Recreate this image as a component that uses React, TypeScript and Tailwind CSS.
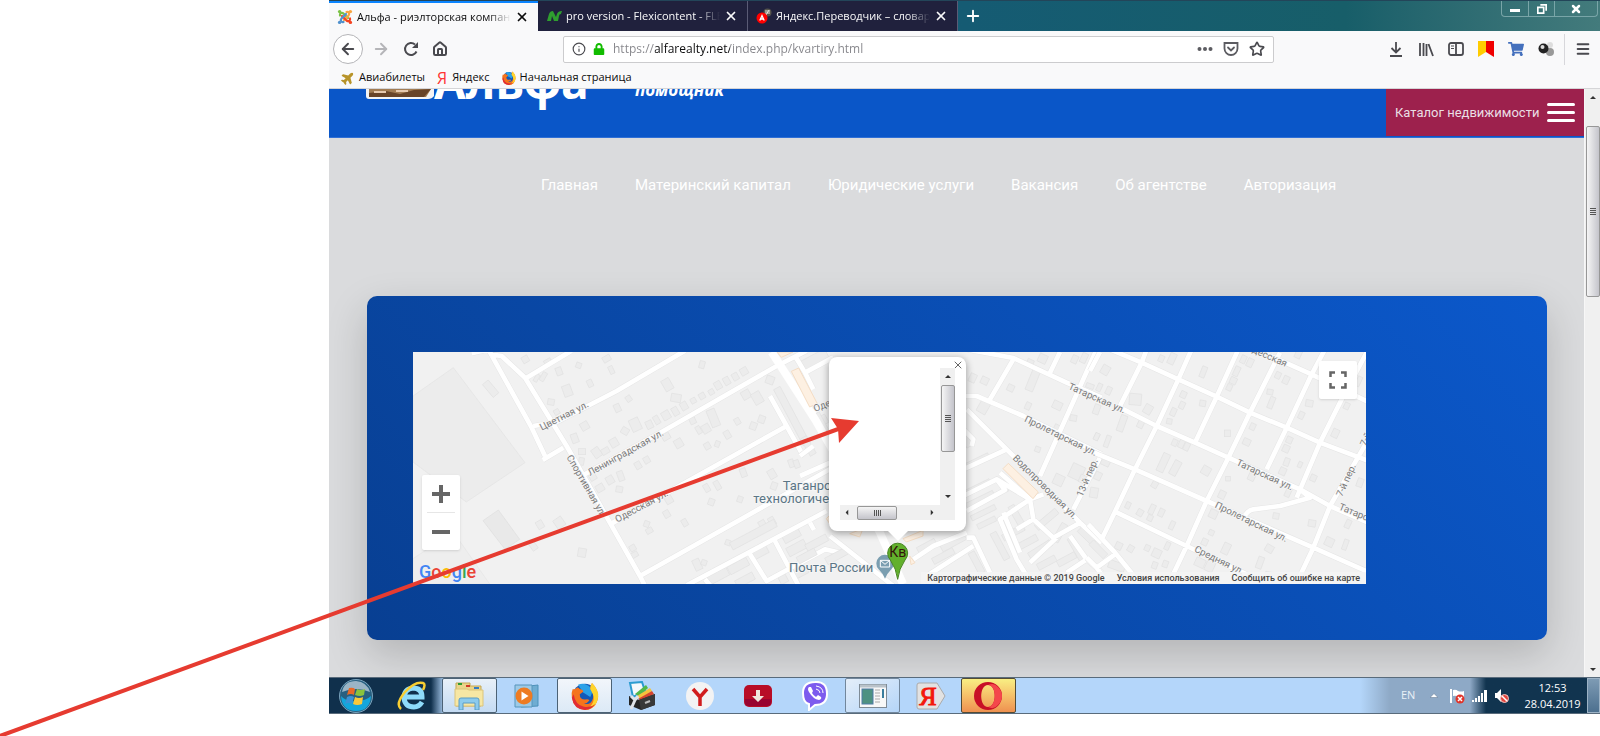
import React from 'react';
import {
  ArrowLeft,
  ArrowRight,
  House,
  Info,
  Menu,
  MoreHorizontal,
  PanelLeft,
  Plus,
  RotateCw,
  Star,
  X,
} from 'lucide-react';
import { FaLock, FaPlane, FaShoppingCart } from 'react-icons/fa';

const bars = [0, 1, 2, 3];

const JoomlaIcon = () => (
  <svg viewBox="0 0 16 16" className="size-4 shrink-0" fill="none" strokeWidth="2.2" strokeLinecap="round">
    <path d="M3 6.5C2.5 4.5 4.500 3 6.500 4.500L11 9" stroke="#7ac143" />
    <path d="M9.500 3C11.500 2.300 13 4.500 11.500 6.500L7 11" stroke="#f9a541" />
    <path d="M13 9.500C13.700 11.500 11.500 13 9.500 11.500L5 7" stroke="#f44321" />
    <path d="M6.500 13C4.500 13.700 3 11.500 4.500 9.500L9 5" stroke="#5091cd" />
    <circle cx="2.600" cy="2.600" r="1.700" fill="#7ac143" />
    <circle cx="13.400" cy="2.600" r="1.700" fill="#f9a541" />
    <circle cx="13.400" cy="13.400" r="1.700" fill="#f44321" />
    <circle cx="2.600" cy="13.400" r="1.700" fill="#5091cd" />
  </svg>
);

const FlexiIcon = () => (
  <svg viewBox="0 0 16 16" className="size-4 shrink-0" fill="#2f9e2f">
    <path d="M1 13L3 6Q4 3 7 3L10 9L11 6Q12 3 16 3L15 6Q13 6 13 8L12 13H8L6 8L5 13Z" />
  </svg>
);

const TranslateIcon = () => (
  <svg viewBox="0 0 16 16" className="size-4 shrink-0">
    <circle cx="11.500" cy="4.500" r="4" fill="#55534c" />
    <path d="M9 3H14M9 5H14M10 7L13 2" stroke="#e5e5dc" />
    <circle cx="6" cy="10" r="5.500" fill="#f00" />
    <path d="M3.800 12.500L6 7.500L8.200 12.500M4.600 11H7.400" stroke="#fff" strokeWidth="1.300" fill="none" />
  </svg>
);

const FirefoxIcon = ({ className }: { className: string }) => (
  <svg viewBox="0 0 32 32" className={className}>
    <circle cx="16" cy="16" r="14" fill="#1559b7" />
    <path d="M8 3Q16 0 22 6Q26 11 22 17L14 12Z" fill="#2ba1e8" />
    <path d="M2 8Q4 9 6 7Q8 5 10 8Q14 9 14 11L10 14Q10 20 16 20Q20 19 21 21Q18 25 14 24Q22 28 25 19Q27 12 22 8Q22 4 24 1Q31 8 31 17Q29 31 16 32Q3 31 1 18Q0 12 2 8Z" fill="#f5741c" />
    <path d="M22 8Q22 4 24 1Q32 9 31 17Q29 31 16 32Q29 25 25 14Z" fill="#ffd52e" />
    <path d="M1 18Q3 31 16 32Q24 31 28 25Q22 30 14 28Q5 26 3 14Z" fill="#e12c35" />
  </svg>
);

const tabs = [
  { title: 'Альфа - риэлторская компания', icon: <JoomlaIcon />, active: true },
  { title: 'pro version - Flexicontent - FLEXI', icon: <FlexiIcon />, active: false },
  { title: 'Яндекс.Переводчик – словарь', icon: <TranslateIcon />, active: false },
];

const TabStrip = () => (
  <div className="flex h-[31px] border-t border-[#234559] bg-linear-to-r from-[#155b73] from-50% via-[#175e69] via-80% to-[#437b7c]">
    {tabs.map((tab) => (
      <div
        key={tab.title}
        className={
          tab.active
            ? 'flex w-[209px] items-center gap-1 border-t-2 border-[#0a84ff] bg-[#f9f9fa] pr-[9px] pl-2 text-[#0c0c0d]'
            : 'flex w-[210px] items-center gap-1 border-r border-[#5a5b75] bg-[#20213d] pr-[9px] pl-2 text-[#f9f9fa]'
        }
      >
        {tab.icon}
        <span className="flex-1 overflow-hidden mask-r-from-85% text-[11px] whitespace-nowrap">{tab.title}</span>
        <button aria-label="Закрыть вкладку">
          <X className="size-[14px]" strokeWidth={3} />
        </button>
      </div>
    ))}
    <button aria-label="Новая вкладка" className="px-[6px] text-white">
      <Plus className="size-[18px]" strokeWidth={2.5} />
    </button>
    <div className="mr-[2px] ml-auto flex h-[16px] w-[97px] divide-x divide-[#79a5a8] rounded-b border border-t-0 border-[#79a5a8] text-white">
      <button aria-label="Свернуть" className="flex w-[27px] items-center justify-center">
        <span className="mt-1 h-[3px] w-[10px] bg-white" />
      </button>
      <button aria-label="Развернуть" className="flex w-[26px] items-center justify-center">
        <svg viewBox="0 0 12 12" className="size-[10px]" fill="none" stroke="#fff" strokeWidth="2">
          <path d="M4 1H11V8M1 4H8V11H1Z" />
        </svg>
      </button>
      <button aria-label="Закрыть" className="flex flex-1 items-center justify-center">
        <X className="size-3" strokeWidth={5} />
      </button>
    </div>
  </div>
);

const Toolbar = () => (
  <div className="flex h-[36px] items-center bg-[#f9f9fa] text-[#4a4a4f]">
    <div className="flex w-[234px] items-center gap-[13px] pl-1">
      <button aria-label="Назад" className="flex size-[30px] items-center justify-center rounded-full border border-[#b5b5b8] bg-white">
        <ArrowLeft className="size-[18px]" strokeWidth={2.5} />
      </button>
      <button aria-label="Вперёд" className="-ml-1 text-[#b5b5b8]">
        <ArrowRight className="size-[18px]" strokeWidth={2.5} />
      </button>
      <button aria-label="Обновить">
        <svg viewBox="0 0 16 16" className="size-4" fill="none" stroke="currentColor" strokeWidth="2">
          <path d="M13.500 10.500A6 6 0 1 1 12 3.500" />
          <path d="M15 1V7H9Z" fill="currentColor" stroke="none" />
        </svg>
      </button>
      <button aria-label="Домой">
        <House className="size-[16px]" strokeWidth={3} />
      </button>
    </div>
    <div className="flex h-[27px] flex-1 items-center gap-[7px] rounded-xs border border-[#ccccce] bg-white px-2">
      <Info className="size-[14px]" />
      <FaLock className="size-3 text-[#12bc00]" />
      <input
        aria-label="Адрес"
        readOnly
        value="https://alfarealty.net/index.php/kvartiry.html"
        className="min-w-0 flex-1 bg-[linear-gradient(to_right,#85858a_43px,#0c0c0d_43px,#0c0c0d_118px,#85858a_118px)] bg-clip-text pl-px text-xs text-transparent outline-none"
      />
      <div className="flex items-center gap-[10px]">
        <svg viewBox="0 0 16 16" className="size-4" fill="#5c5c61">
          <circle cx="2.500" cy="8" r="2" />
          <circle cx="8" cy="8" r="2" />
          <circle cx="13.500" cy="8" r="2" />
        </svg>
        <svg viewBox="0 0 16 16" className="size-4" fill="none" stroke="#5c5c61" strokeWidth="1.800" strokeLinecap="round">
          <path d="M1.500 2H14.500V7.500A6.500 6.500 0 0 1 1.500 7.500Z" />
          <path d="M5 6.500L8 9.500L11 6.500" />
        </svg>
        <Star className="size-4" strokeWidth={2.5} />
      </div>
    </div>
    <div className="flex w-[326px] items-center justify-end gap-[10px] pr-[9px]">
      <div className="flex items-center gap-[14px]">
        <svg viewBox="0 0 16 16" className="size-4" fill="none" stroke="currentColor" strokeWidth="1.800">
          <path d="M8 1V11M3.500 7L8 11.500L12.500 7M2 15H14" />
        </svg>
        <svg viewBox="0 0 16 16" className="size-4" fill="none" stroke="currentColor" strokeWidth="1.800">
          <path d="M2 2V15M5.500 2V15M8.500 3V15M10.500 3L15 15" />
        </svg>
        <svg viewBox="0 0 16 16" className="size-4" fill="none" stroke="currentColor" strokeWidth="1.800">
          <rect x="1" y="2" width="14" height="12" rx="2" />
          <path d="M8 2V14" />
          <path d="M3 5H6M3 7.500H6" strokeWidth="1.200" />
        </svg>
        <svg viewBox="0 0 16 16" className="size-4">
          <path d="M0 0H8V11L0 16Z" fill="#fc0" />
          <path d="M8 0H16V16L8 11Z" fill="#f00000" />
        </svg>
        <FaShoppingCart className="size-4 text-[#4470bd]" />
        <svg viewBox="0 0 16 16" className="size-4">
          <circle cx="12" cy="11" r="4" fill="#999" />
          <circle cx="12" cy="4" r="3" fill="#ddd" />
          <circle cx="5.500" cy="7.500" r="5" fill="#222" />
          <circle cx="4.500" cy="6" r="2" fill="#ddd" />
        </svg>
      </div>
      <div className="flex h-[31px] items-center border-l border-[#d7d7db] pl-[10px]">
        <button aria-label="Меню">
          <Menu className="block size-4" strokeWidth={3} />
        </button>
      </div>
    </div>
  </div>
);

const Bookmarks = () => (
  <div className="flex h-[22px] items-center gap-3 border-b border-[#d5d5d7] bg-[#f9f9fa] pl-3 text-[11px] text-[#0c0c0d]">
    <a href="#avia" className="flex items-center gap-1">
      <FaPlane className="size-[14px] -rotate-45 text-[#b8942a]" />
      Авиабилеты
    </a>
    <a href="#yandex" className="flex items-center gap-[5px]">
      <span className="text-base leading-4 text-[#f33]">Я</span>
      Яндекс
    </a>
    <a href="#start" className="flex items-center gap-1">
      <FirefoxIcon className="size-[14px]" />
      Начальная страница
    </a>
  </div>
);

const menuItems = ['Главная', 'Материнский капитал', 'Юридические услуги', 'Вакансия', 'Об агентстве', 'Авторизация'];

// Roads and buildings are drawn in three adjoining sections, 3 units per pixel.
const westRoads = [
  'M185 22L235 10L365 245L405 330M240 25L275 30L345 95L470 300L690 690L705 720',
  'M345 98L485 14M370 240L440 228L620 135L825 14M398 342L460 305',
  'M515 390L760 255L1100 60L1190 14M600 535L790 430L1130 240M1080 150L1180 330',
  'M1155 30L1185 80L1210 130M1185 80L1270 34M1195 205L1270 165',
  'M690 690L1250 375L1350 320M830 718L1250 495M885 700L900 718M1095 585L1165 718M1020 625L1070 705L1245 610L1290 620M1200 530L1212 552',
];

const centerRoads = [
  'M500 10L640 36L800 110L905 155M640 40L570 160M750 80L780 18M720 390L890 10',
  'M490 150L530 150L670 210L905 325M500 190L620 310L840 530L905 590M620 310L490 370M820 490L900 335',
  'M490 450L590 400L690 460L730 445M600 380L690 460L700 520L760 575L840 530M590 400L615 432L500 495M690 460L600 520L650 640L680 690M610 500L660 620M700 520L650 550M770 575L690 650M810 570L860 640L905 680M860 640L800 680',
  'M480 240L520 280L515 300M500 575L520 575L570 680M380 690L520 600M90 570L280 720M0 330L40 300M0 390L90 350M340 640L400 600L500 560',
];

const eastRoads = [
  'M60 10L155 50L265 100L380 152L480 200L590 245L690 290L835 345',
  'M90 185L200 240L315 290L415 335L630 430L720 480L835 530',
  'M-5 312L25 325L135 370L350 465L670 605L835 678M75 497L290 600L470 685',
  'M30 18L0 75M170 10L155 50L90 180M305 10L265 100L200 240L135 370L75 497L35 580M445 10L380 152L315 290',
  'M570 20L480 200L415 335L350 465L290 600L240 705M705 10L665 85L590 245L530 370M835 10L755 160L690 290L620 455M835 280L720 480L670 605L625 700',
  'M530 25L665 85L835 168M465 508Q475 492 490 490L570 480L660 455L630 430M-5 535L75 620L140 700M75 625L20 665L-10 635M20 665L45 700',
];

type Box = [number, number, number, number, number];

const westBoxes: Box[] = [
  [242, 128, 22, 50, -40], [346, 40, 20, 20, -30], [415, 50, 22, 22, -30], [447, 76, 18, 24, -20], [400, 92, 14, 28, 30],
  [380, 96, 12, 24, 30], [506, 58, 16, 16, 20], [590, 38, 24, 18, -30], [604, 72, 14, 24, -25], [472, 134, 26, 34, -20],
  [540, 112, 16, 22, -25], [423, 168, 20, 18, 10], [440, 198, 16, 16, -30], [524, 240, 24, 24, -30], [494, 277, 20, 28, -20],
  [516, 317, 22, 18, 0], [514, 346, 16, 22, 10], [560, 320, 24, 30, -35], [586, 315, 24, 18, -30], [612, 290, 24, 26, -30],
  [645, 255, 22, 20, 30], [676, 236, 30, 38, -25], [656, 158, 16, 18, -35], [622, 186, 18, 24, -25], [772, 116, 26, 36, -30],
  [798, 156, 30, 24, 10], [876, 56, 16, 22, 15], [718, 236, 20, 24, -25], [740, 222, 16, 26, -30], [768, 208, 24, 26, -30],
  [796, 196, 18, 26, -30], [822, 180, 20, 24, -30], [850, 164, 16, 16, -30], [876, 150, 18, 18, -30], [904, 138, 16, 16, -30],
  [924, 118, 20, 24, -30], [950, 105, 18, 24, -30], [976, 92, 18, 22, -30], [1002, 76, 22, 22, -30], [1080, 102, 24, 24, 20],
  [910, 216, 26, 54, -22], [866, 252, 14, 24, -30], [888, 248, 24, 26, -30], [848, 224, 18, 20, -25], [952, 266, 18, 24, -30],
  [982, 226, 16, 20, -30], [1030, 240, 20, 22, 20], [1055, 220, 20, 22, 20], [1008, 146, 26, 26, -30], [1042, 156, 28, 36, -30],
  [806, 292, 24, 26, -30], [768, 272, 24, 20, -30], [892, 300, 18, 20, -30], [922, 294, 14, 18, 20], [548, 392, 20, 22, -30],
  [570, 426, 24, 22, -30], [600, 402, 22, 24, -30], [632, 390, 18, 30, -20], [628, 430, 20, 18, 10], [684, 358, 18, 22, -30],
  [710, 342, 18, 20, -30], [390, 536, 20, 24, -30], [448, 530, 28, 30, -35], [516, 620, 24, 26, 10], [370, 600, 18, 26, -35],
  [710, 534, 16, 18, 20], [718, 554, 20, 16, -30], [770, 504, 18, 22, -30], [824, 530, 16, 22, -30], [668, 606, 18, 18, -30],
  [674, 626, 20, 16, -30], [776, 460, 22, 26, -30], [890, 426, 16, 24, -30], [922, 418, 16, 28, -30], [904, 468, 18, 20, 20],
  [990, 460, 16, 18, 20], [1000, 380, 18, 26, -20], [1086, 384, 22, 28, -30], [1092, 420, 18, 22, 20], [1144, 352, 16, 24, -20],
  [1160, 354, 16, 24, -20], [1058, 536, 20, 26, -30], [1086, 526, 18, 26, -30], [954, 590, 16, 16, 20], [862, 656, 22, 34, -25],
  [882, 650, 16, 16, 20], [1030, 566, 24, 150, 62], [1145, 210, 22, 190, -28], [1240, 222, 24, 28, -30],
  [1215, 40, 80, 30, -28], [925, 690, 64, 26, -28], [985, 660, 64, 26, -28], [1050, 620, 50, 24, -28], [1145, 570, 54, 24, -28],
  [1160, 606, 60, 28, -28], [1005, 702, 58, 24, -28], [1170, 680, 50, 24, -28], [1120, 700, 24, 24, -28],
];

const centerBoxes: Box[] = [
  [550, 184, 30, 36, 30], [518, 96, 20, 26, 25], [554, 104, 22, 22, 25], [632, 126, 20, 20, 25], [684, 180, 16, 22, 25],
  [698, 104, 24, 64, 22], [728, 38, 26, 26, 25], [824, 40, 18, 24, 25], [852, 36, 18, 30, 25], [772, 178, 28, 24, 25],
  [820, 216, 20, 18, 10], [713, 310, 16, 16, 20], [770, 250, 20, 28, 25], [830, 378, 40, 44, 25], [850, 400, 24, 24, 25],
  [890, 272, 14, 20, 25], [776, 402, 30, 32, 25], [690, 50, 20, 20, 25], [870, 120, 24, 14, 20],
  [530, 425, 90, 16, -26], [540, 460, 90, 16, -26], [550, 500, 80, 16, -26], [560, 530, 60, 16, -26], [530, 345, 80, 16, -26],
  [500, 285, 20, 38, -30], [650, 510, 70, 20, 60], [640, 560, 70, 20, -28], [680, 590, 70, 20, -28], [720, 610, 76, 20, -32],
  [740, 520, 80, 20, -40], [780, 560, 20, 60, 30], [830, 610, 80, 20, 60], [800, 640, 60, 20, -28], [740, 650, 60, 20, -28],
  [860, 570, 60, 20, 44], [460, 590, 80, 20, -28], [430, 630, 70, 20, -28], [530, 650, 20, 70, -28], [600, 600, 20, 90, -28],
  [380, 600, 60, 20, -28], [50, 590, 70, 22, -28], [110, 630, 70, 22, -28], [20, 630, 60, 22, -28], [60, 230, 26, 60, -28], [25, 300, 60, 20, 60],
];

const eastBoxes: Box[] = [
  [46, 72, 24, 28, 30], [28, 124, 14, 24, 25], [56, 134, 16, 24, 25], [20, 190, 18, 30, 20], [96, 232, 20, 50, 20],
  [136, 160, 36, 34, 5], [174, 190, 24, 28, 30], [152, 234, 18, 24, 25], [214, 38, 16, 20, 25], [246, 38, 20, 34, 25],
  [340, 78, 16, 34, 22], [280, 146, 18, 20, 25], [276, 178, 16, 22, 25], [250, 198, 16, 24, 25], [238, 226, 16, 16, 10],
  [338, 172, 18, 18, 10], [254, 290, 16, 20, 25], [274, 294, 16, 24, 25], [290, 302, 16, 24, 25], [220, 350, 22, 58, 25],
  [256, 366, 22, 46, 28], [348, 374, 26, 26, 30], [194, 416, 18, 20, 30], [20, 272, 14, 22, 25], [52, 286, 14, 36, 20],
  [440, 76, 16, 30, 25], [430, 104, 20, 20, 25], [418, 124, 16, 20, 25], [460, 40, 16, 24, 25], [480, 50, 18, 26, 25],
  [412, 262, 18, 20, 0], [470, 288, 22, 20, 25], [488, 242, 16, 20, 25], [544, 170, 16, 36, 22], [540, 138, 18, 16, 10],
  [588, 102, 18, 24, 25], [564, 88, 16, 20, 25], [658, 172, 22, 20, 10], [634, 208, 16, 22, 25], [598, 282, 18, 20, 25],
  [588, 308, 20, 22, 25], [590, 348, 16, 24, 20], [630, 356, 12, 18, 25], [578, 376, 20, 22, 25], [670, 396, 18, 20, 25],
  [594, 440, 16, 26, 25], [486, 390, 20, 28, 25], [396, 446, 20, 24, 25], [414, 398, 14, 14, 0], [370, 504, 24, 26, 25],
  [114, 478, 14, 20, 25], [150, 500, 18, 20, 30], [186, 490, 16, 30, 25], [180, 516, 16, 18, 25], [214, 500, 16, 24, 25],
  [246, 538, 14, 26, 25], [558, 510, 18, 18, 10], [666, 532, 22, 20, 10], [774, 534, 16, 26, 25], [718, 588, 26, 26, 25],
  [766, 596, 14, 32, 20], [538, 608, 24, 22, 30], [510, 650, 18, 36, 20], [408, 608, 22, 34, 25], [364, 560, 16, 16, 25],
  [344, 588, 18, 20, 25], [330, 650, 30, 26, 25], [360, 660, 26, 34, 25], [86, 600, 20, 22, 25], [122, 608, 18, 20, 30],
  [172, 606, 16, 18, 25], [200, 622, 26, 26, 25], [232, 600, 14, 24, 25], [194, 658, 16, 20, 20], [226, 654, 16, 20, 20],
  [736, 262, 20, 26, 25], [770, 180, 16, 20, 25], [626, 22, 18, 30, 25], [806, 106, 14, 30, 25], [12, 440, 24, 30, 10],
  [24, 390, 20, 24, 25], [46, 350, 26, 18, 25], [810, 410, 18, 26, 20], [550, 690, 50, 20, 10], [25, 610, 20, 60, -45], [80, 660, 50, 24, 20],
];

const MapSection = ({ x, roads, boxes }: { x: number; roads: string[]; boxes: Box[] }) => (
  <g transform={`translate(${x} -18)`}>
    {boxes.map(([cx, cy, w, h, angle], i) => (
      <rect
        key={i}
        x={cx - w / 2}
        y={cy - h / 2}
        width={w}
        height={h}
        transform={`rotate(${angle} ${cx} ${cy})`}
        fill="#ececec"
        stroke="#e1e1e1"
        strokeWidth="2"
      />
    ))}
    <path d={roads.join('')} fill="none" stroke="#e6e6e6" strokeWidth="17" />
    <path d={roads.join('')} fill="none" stroke="#fff" strokeWidth="14" strokeLinejoin="round" />
  </g>
);

const streets: [string, number, number, number][] = [
  ['Цветная ул.', 386, 236, -27],
  ['Ленинградская ул.', 531, 372, -29],
  ['Спортивная ул.', 460, 316, 60],
  ['Одесская ул.', 613, 512, -28],
  ['Одесская', 1206, 180, -22],
  ['Татарская ул.', 1964, 110, 24],
  ['Пролетарская ул.', 1832, 208, 26],
  ['Водопроводная ул.', 1798, 320, 45],
  ['13-й пер.', 2008, 436, -67],
  ['Одесская', 2498, -8, 24],
  ['Татарская ул.', 2468, 338, 25],
  ['Пролетарская ул.', 2404, 466, 26],
  ['Средняя ул.', 2342, 598, 26],
  ['7-й пер.', 2787, 436, -66],
  ['Татарская', 2776, 472, 22],
  ['7-й', 2858, 284, -66],
];

const CityMap = () => (
  <svg viewBox="0 0 2859 696" preserveAspectRatio="xMidYMid slice" className="h-full w-full bg-[#f1f1f1]">
    <path d="M0 132L121 47L336 332L160 450L0 330Z" fill="#ececec" stroke="#e2e2e2" strokeWidth="2" />
    <path d="M210 506L256 474L320 562L276 592Z" fill="#e9e9e9" stroke="#dedede" strokeWidth="2" />
    <path d="M0 620L121 540L230 696H0Z" fill="#eeeeee" stroke="#e6e6e6" strokeWidth="2" />
    <MapSection x={-9} roads={westRoads} boxes={westBoxes} />
    <MapSection x={1161} roads={centerRoads} boxes={centerBoxes} />
    <MapSection x={2031} roads={eastRoads} boxes={eastBoxes} />
    <path d="M1076 0L1206 202L1400 540L1470 696" fill="none" stroke="#fff" strokeWidth="24" />
    <path d="M1135 58L1157 48L1213 155L1190 165ZM1092 0H1140L1105 16ZM1770 350L1786 334L1876 420L1860 440ZM1240 500L1260 480V530ZM1310 545L1350 530L1340 555ZM1470 560L1530 535V552L1480 570ZM1490 612L1506 632L1494 638Z" fill="#fdf0e2" stroke="#f4ddc5" strokeWidth="3" />
    <g fontFamily="Roboto, sans-serif" fontSize="29" fill="#7b7b7b" stroke="#f5f5f5" strokeWidth="5" paintOrder="stroke">
      {streets.map(([name, x, y, angle]) => (
        <text key={`${name}${x}`} transform={`translate(${x} ${y}) rotate(${angle})`}>
          {name}
        </text>
      ))}
    </g>
    <g fontFamily="Roboto, sans-serif" fontSize="39" fill="#5b7686" stroke="#f5f5f5" strokeWidth="6" paintOrder="stroke">
      <text x="1109" y="414">Таганрогский</text>
      <text x="1021" y="454">технологический</text>
      <text x="1128" y="660">Почта России</text>
    </g>
    <path d="M1416 680Q1410 665 1397 652A26 26 0 1 1 1435 652Q1422 665 1416 680Z" fill="#7b9eb0" />
    <path d="M1402 625H1430V645H1402ZM1402 625L1416 637L1430 625" fill="none" stroke="#fff" strokeWidth="3" />
    <path d="M1454 682Q1450 650 1432 624A30 30 0 1 1 1476 624Q1458 650 1454 682Z" fill="#62b02c" stroke="#468420" strokeWidth="3" />
    <text x="1454" y="616" textAnchor="middle" fontFamily="Roboto, sans-serif" fontSize="42" fill="#33130b">Кв</text>
  </svg>
);

const Caret = ({ className }: { className: string }) => (
  <svg viewBox="0 0 8 4" className={className} fill="#333">
    <path d="M0 4L4 0L8 4Z" />
  </svg>
);

const InfoWindow = () => (
  <div className="absolute top-[5px] left-[416px] h-[174px] w-[137px] rounded-lg bg-white shadow-[0_2px_7px_1px_rgba(0,0,0,0.3)]">
    <svg viewBox="0 0 20 10" className="absolute top-full left-[59px] h-[10px] w-5" fill="#fff">
      <path d="M0 0H20L10 10Z" />
    </svg>
    <button aria-label="Закрыть" className="absolute top-[2px] right-[2px] text-[#666]">
      <X className="size-3" />
    </button>
    <div className="absolute top-[11px] left-[11px] flex h-[152px] w-[115px] flex-col">
      <div className="flex flex-1 justify-end">
        <div className="flex w-[15px] flex-col items-center bg-[#f0f0f0] pt-[7px] pb-[7px]">
          <Caret className="h-[3px] w-[6px]" />
          <div className="mt-[7px] mb-auto flex h-[67px] w-[14px] flex-col items-center justify-center gap-px rounded-xs border border-[#979797] bg-linear-to-r from-[#f5f5f5] to-[#c4c4cb]">
            {bars.map((n) => <span key={n} className="h-px w-[6px] bg-[#555]" />)}
          </div>
          <Caret className="h-[3px] w-[6px] rotate-180" />
        </div>
      </div>
      <div className="flex h-[15px] items-center bg-[#f0f0f0] pr-[20px] pl-[4px]">
        <Caret className="h-[3px] w-[6px] -rotate-90" />
        <div className="mr-auto ml-[7px] flex h-[14px] w-[40px] items-center justify-center gap-px rounded-xs border border-[#979797] bg-linear-to-b from-[#f5f5f5] to-[#c4c4cb]">
          {bars.map((n) => <span key={n} className="h-[6px] w-px bg-[#555]" />)}
        </div>
        <Caret className="h-[3px] w-[6px] rotate-90" />
      </div>
    </div>
  </div>
);

const MapPanel = () => (
  <div className="relative h-[232px] flex-1 overflow-hidden font-[Roboto,sans-serif]">
    <CityMap />
    <InfoWindow />
    <button aria-label="Во весь экран" className="absolute top-[9px] right-[9px] flex size-[38px] items-center justify-center rounded-xs bg-white shadow">
      <svg viewBox="0 0 18 18" className="size-[18px]" fill="none" stroke="#666" strokeWidth="2.500">
        <path d="M1.500 6V1.500H6M12 1.500H16.500V6M16.500 12V16.500H12M6 16.500H1.500V12" />
      </svg>
    </button>
    <div className="absolute bottom-[34px] left-[9px] flex w-[38px] flex-col divide-y divide-[#e6e6e6] rounded-xs bg-white px-[5px] shadow">
      <button aria-label="Увеличить" className="flex h-[38px] items-center justify-center">
        <svg viewBox="0 0 18 18" className="size-[18px]" stroke="#666" strokeWidth="4">
          <path d="M9 0V18M0 9H18" />
        </svg>
      </button>
      <button aria-label="Уменьшить" className="flex h-[37px] items-center justify-center">
        <svg viewBox="0 0 18 18" className="size-[18px]" stroke="#666" strokeWidth="4">
          <path d="M0 9H18" />
        </svg>
      </button>
    </div>
    <a href="#google" className="absolute bottom-0 left-[6px] text-[18px] leading-6 font-medium">
      <span className="text-[#4285f4]">G</span>
      <span className="text-[#ea4335]">o</span>
      <span className="text-[#fbbc05]">o</span>
      <span className="text-[#4285f4]">g</span>
      <span className="text-[#34a853]">l</span>
      <span className="text-[#ea4335]">e</span>
    </a>
    <div className="absolute right-0 bottom-0 flex h-3 items-center gap-3 bg-[#f5f5f5]/80 px-[6px] text-[9px] leading-3 font-medium whitespace-nowrap text-[#444]">
      <span>Картографические данные © 2019 Google</span>
      <a href="#terms">Условия использования</a>
      <a href="#report">Сообщить об ошибке на карте</a>
    </div>
  </div>
);

const Site = () => (
  <div className="flex h-[588px]">
    <div className="flex min-w-0 flex-1 flex-col overflow-hidden bg-[#dadbdd]">
      <header className="flex h-[49px] items-start justify-between border-b border-[#2f6fd6] bg-[#0a56c8]">
        <div className="flex h-[26px] items-end pl-[37px] font-[Open_Sans,sans-serif] text-white">
          <svg viewBox="0 0 68 10" className="h-[10px] w-[68px] self-start">
            <path d="M0 0H68V7Q66 10 62 10H3Q0 10 0 7Z" fill="#f4f4f4" />
            <path d="M3 0H65L60 8H3Z" fill="#a27c53" />
            <path d="M3 4L20 2L34 5L48 1L65 0L58 8H3Z" fill="#684428" />
            <path d="M8 3H20M30 2H42" stroke="#e7caaf" strokeWidth="2" />
          </svg>
          <span className="h-[68px] text-[46px] leading-[68px] font-bold">Альфа</span>
          <span className="ml-[46px] h-[36px] text-[17px] leading-[22px] font-bold italic">помощник</span>
        </div>
        <button className="flex h-[47px] w-[198px] items-center justify-between bg-[#9d214d] pr-[9px] pl-[9px] font-[Roboto,sans-serif] text-[13px] whitespace-nowrap text-[#eadfe4]">
          Каталог недвижимости
          <span className="flex w-7 flex-col gap-[5px]">
            <span className="h-[3px] rounded-full bg-white" />
            <span className="h-[3px] rounded-full bg-white" />
            <span className="h-[3px] rounded-full bg-white" />
          </span>
        </button>
      </header>
      <nav className="mt-[35px] mr-9 flex justify-center gap-[37px] font-[Roboto,sans-serif] text-[15px] leading-6 text-white">
        {menuItems.map((item) => (
          <a key={item} href="#menu">{item}</a>
        ))}
      </nav>
      <section className="mt-[99px] mr-[37px] ml-[38px] flex rounded-[10px] bg-linear-45 from-[#083f92] to-[#0b58cb] pt-[56px] pr-[181px] pb-[56px] pl-[46px] shadow-[0_15px_40px_rgba(0,0,0,0.18)]">
        <MapPanel />
      </section>
    </div>
    <div className="flex w-4 flex-col items-center border-l border-[#f7f7f7] bg-[#f0f0f0] pt-[7px] pb-[6px]">
      <Caret className="h-[3px] w-[6px]" />
      <div className="mt-[27px] mb-auto flex h-[171px] w-[14px] flex-col items-center justify-center gap-px rounded-xs border border-[#979797] bg-linear-to-r from-[#f5f5f5] to-[#c4c4cb]">
        {bars.map((n) => <span key={n} className="h-px w-[6px] bg-[#555]" />)}
      </div>
      <Caret className="h-[3px] w-[6px] rotate-180" />
    </div>
  </div>
);

const apps = [
  {
    name: 'Internet Explorer',
    frame: '',
    icon: (
      <svg viewBox="0 0 30 30" className="size-[30px]" fill="none">
        <path d="M8 16H25Q25 7 16 7Q7 8 7 17Q8 26 17 26Q22 26 25 21" stroke="#8edbfa" strokeWidth="5" />
        <path d="M4 28Q-2 23 8 11Q18 0 26 2Q29 3 26 9" stroke="#f8ce32" strokeWidth="2.500" />
      </svg>
    ),
  },
  {
    name: 'Проводник',
    frame: 'border border-[#4c6275] bg-linear-to-b from-[#e8f0f8] to-[#c4dbf3]',
    icon: (
      <svg viewBox="0 0 30 28" className="h-7 w-[30px]">
        <path d="M2 1H16V4H27V24H2Z" fill="#ead58a" stroke="#c5a752" />
        <path d="M4 2H8" stroke="#2d9b31" strokeWidth="2" />
        <path d="M12 4H16" stroke="#d13a28" strokeWidth="2" />
        <path d="M20 6H25" stroke="#347cc1" strokeWidth="2" />
        <path d="M1 7H13L15 8H29V24H1Z" fill="#f7e7a4" stroke="#dbc47a" />
        <path d="M5 28V18Q5 16 7 16H23Q25 16 25 18V28H21V21H9V28Z" fill="#8ccbed" stroke="#5a9cc5" />
      </svg>
    ),
  },
  {
    name: 'Windows Media',
    frame: '',
    icon: (
      <svg viewBox="0 0 28 24" className="h-6 w-7">
        <path d="M8 3L25 1V22L8 23Z" fill="#6fadd2" stroke="#4d91ba" />
        <path d="M2 1H19V23H2Z" fill="#9cc9e5" stroke="#5795bc" />
        <circle cx="11" cy="12" r="8.500" fill="#ee7b22" />
        <path d="M8.500 7.500L15.500 12L8.500 16.500Z" fill="#fff" />
      </svg>
    ),
  },
  {
    name: 'Firefox',
    frame: 'border border-[#4c6275] bg-linear-to-b from-[#f2f6fb] to-[#dce9f6]',
    icon: <FirefoxIcon className="size-7" />,
  },
  {
    name: 'Файлы',
    frame: '',
    icon: (
      <svg viewBox="0 0 30 30" className="size-[30px]">
        <path d="M3 2L15 1L18 10L6 16Z" fill="#f4f8fb" stroke="#2b9cd0" strokeWidth="2" />
        <path d="M8 13L19 4L21 7L12 15Z" fill="#52b848" />
        <path d="M10 15L23 7L25 10L13 18Z" fill="#f5c13c" />
        <path d="M11 18L25 10L27 13L15 20Z" fill="#d6452f" />
        <path d="M2 15L12 19L28 13V24L14 29L2 24Z" fill="#252525" />
        <path d="M12 19L28 13V24L14 29Z" fill="#383838" />
        <path d="M18 22L23 20" stroke="#bbb" strokeWidth="2" />
        <path d="M4 28L8 19M4 15L8 19L11 15" stroke="#dfe3e8" strokeWidth="3" fill="none" />
      </svg>
    ),
  },
  {
    name: 'Яндекс.Браузер',
    frame: '',
    icon: (
      <svg viewBox="0 0 28 28" className="size-7">
        <circle cx="14" cy="14" r="14" fill="#f3f3f3" />
        <path d="M7 7L14 15L21 7M14 15V24" fill="none" stroke="#d11d1d" strokeWidth="3.500" />
      </svg>
    ),
  },
  {
    name: 'Загрузчик',
    frame: '',
    icon: (
      <svg viewBox="0 0 28 22" className="h-[22px] w-7">
        <rect width="28" height="22" rx="5" fill="#b80d26" />
        <path d="M1 14H27V18Q26 21 23 21H5Q1 21 1 17Z" fill="#980331" />
        <path d="M12 5H16V11H20L14 17L8 11H12Z" fill="#f0e6dc" />
      </svg>
    ),
  },
  {
    name: 'Viber',
    frame: '',
    icon: (
      <svg viewBox="0 0 28 30" className="h-[30px] w-7">
        <path d="M14 1Q26 0 26 13Q26 24 14 24L8 29V23Q2 22 2 12Q2 1 14 1Z" fill="#7d5bee" stroke="#fff" strokeWidth="2" />
        <path d="M8 6Q6 8 8 11Q12 18 18 19Q21 18 20 16L17 14L15 16Q12 14 11 12L12 10L10 6Z" fill="#fff" />
        <path d="M15 5Q22 6 22 12M15 8Q19 9 19 12" fill="none" stroke="#fff" />
      </svg>
    ),
  },
  {
    name: 'Окно',
    frame: 'border border-[#72879c] bg-linear-to-br from-[#e4eef9] to-[#b4d5f8]',
    icon: (
      <svg viewBox="0 0 28 24" className="h-6 w-7">
        <rect x="0.500" y="0.500" width="27" height="23" fill="#f8f8f8" stroke="#7f8b96" />
        <path d="M1 2H27" stroke="#b9c2ca" strokeWidth="3" />
        <rect x="3" y="5" width="11" height="15" fill="#4e9181" stroke="#4f7ba6" />
        <path d="M16 6H21M16 9H21M16 12H21M16 15H21M16 18H21" stroke="#aaa" />
        <rect x="23" y="5" width="2" height="9" fill="#397d9e" />
      </svg>
    ),
  },
  {
    name: 'Яндекс',
    frame: '',
    icon: (
      <svg viewBox="0 0 30 28" className="h-7 w-[30px]">
        <path d="M3 1H21L29 14L21 27H3Q1 27 1 25V3Q1 1 3 1Z" fill="#e2e2e2" stroke="#aaa" />
        <text x="12" y="23" textAnchor="middle" fontFamily="Liberation Serif, serif" fontSize="26" fill="#f3170d" stroke="#f3170d">Я</text>
      </svg>
    ),
  },
  {
    name: 'Opera',
    frame: 'border border-[#534b35] bg-linear-to-b from-[#f8ef83] to-[#ee9150]',
    icon: (
      <svg viewBox="0 0 28 28" className="size-7">
        <path fillRule="evenodd" d="M14 0A14 14 0 1 1 14 28A14 14 0 0 1 14 0ZM14 3C5 3 5 25 14 25C23 25 23 3 14 3Z" fill="#c80f26" />
        <path d="M14 3Q20 0 24 5Q28 9 28 14Q28 19 24 23Q20 28 14 25C23 25 23 3 14 3Z" fill="#f4474b" />
      </svg>
    ),
  },
];

const Taskbar = () => (
  <div className="flex h-[37px] items-center border-t border-b border-[#596b7b] bg-[#b4d6fa] text-white">
    <div className="flex h-full w-[688px] bg-linear-to-r from-[#10304c] from-[102px] to-transparent to-[116px]">
      <button aria-label="Пуск" className="flex w-[54px] items-center justify-center">
        <svg viewBox="0 0 34 34" className="size-[34px]">
          <circle cx="17" cy="17" r="16.500" fill="#286080" stroke="#7aa3bd" />
          <path d="M2 17Q7 23 17 22Q27 22 32 17Q31 32 17 32Q3 32 2 17Z" fill="#13a6dc" />
          <path d="M3 13Q5 2 17 2Q28 3 31 13Q17 7 3 13Z" fill="#9bb5c6" />
          <path d="M10 9Q14 8 16 10L15 16Q12 14 8 16Z" fill="#e86a28" />
          <path d="M18 10Q22 12 26 10L25 16Q21 18 16 16Z" fill="#8ac33d" />
          <path d="M8 18Q12 16 15 18L13 25Q10 23 6 25Z" fill="#3b93d6" />
          <path d="M16 18Q20 20 24 18L23 25Q18 27 14 25Z" fill="#fac83a" />
        </svg>
      </button>
      <div className="grid flex-1 grid-cols-11">
        {apps.map((app) => (
          <div key={app.name} className="flex justify-center">
            <button aria-label={app.name} className={`flex w-[55px] items-center justify-center rounded-xs ${app.frame}`}>
              {app.icon}
            </button>
          </div>
        ))}
      </div>
    </div>
    <div className="ml-auto flex h-full w-[240px] items-center bg-linear-to-r from-transparent via-[#8ea9c6] via-[30px] to-[#8ea9c6] to-[110px]">
      <span className="ml-[41px] w-[14px] text-[11px] text-[#e9f0f7]">EN</span>
      <svg viewBox="0 0 8 4" className="ml-[15px] h-[5px] w-2" fill="#fff" stroke="#59718a" strokeWidth="0.500">
        <path d="M0 4L4 0L8 4Z" />
      </svg>
      <svg viewBox="0 0 16 16" className="ml-[11px] size-4">
        <path d="M2 1V15" stroke="#fff" strokeWidth="2" />
        <path d="M4 2Q7 1 9 3Q12 4 15 3V9Q11 10 9 9Q7 7 4 8Z" fill="#fff" />
        <circle cx="11" cy="11" r="4.500" fill="#e0352b" />
        <path d="M9 9L13 13M13 9L9 13" stroke="#fff" strokeWidth="1.500" />
      </svg>
      <div className="ml-[5px] flex h-full flex-1 items-center bg-linear-to-r from-transparent to-[#11344f] to-[16px]">
        <svg viewBox="0 0 16 12" className="ml-[2px] h-3 w-4" fill="#fff">
          <path d="M0 10H2V12H0ZM3 8H5V12H3ZM6 6H8V12H6ZM9 3H11V12H9ZM12 0H15V12H12Z" />
        </svg>
        <svg viewBox="0 0 16 16" className="ml-[6px] size-4">
          <path d="M1 5H3L7 1V14L3 10H1Z" fill="#fff" />
          <circle cx="10.500" cy="10.500" r="4" fill="#e4453d" stroke="#f2c7c5" />
          <path d="M8 8L13 13" stroke="#fff" strokeWidth="1.500" />
        </svg>
        <div className="flex flex-1 flex-col pl-2 text-center text-[11px] leading-4">
          <span>12:53</span>
          <span>28.04.2019</span>
        </div>
      </div>
      <button aria-label="Показать рабочий стол" className="h-full w-[13px] border border-[#9cb2c5] bg-linear-to-b from-[#7e9bb4] to-[#4d708f]" />
    </div>
  </div>
);

const App = () => {
  return (
    <div className="relative min-h-screen bg-white pl-[329px] font-[Open_Sans,Noto_Sans,sans-serif]">
      <TabStrip />
      <Toolbar />
      <Bookmarks />
      <Site />
      <Taskbar />
      <svg viewBox="0 0 860 736" className="pointer-events-none absolute top-0 left-0 h-[736px] w-[860px]">
        <path d="M0 736L841 428" stroke="#e63b30" strokeWidth="4" />
        <path d="M831 418L859 421L839 443L838 429Z" fill="#e63b30" />
      </svg>
    </div>
  );
};

export default App;
